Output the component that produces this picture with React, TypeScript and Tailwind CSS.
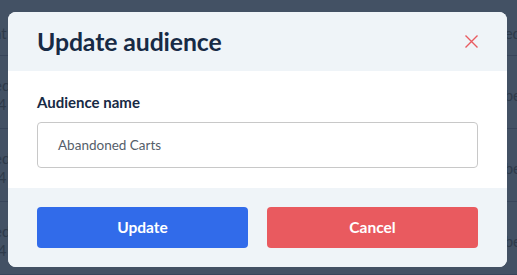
import React from "react";

const rowsLeft = ["ed", "ed", "ed"];

const Backdrop = () => {
  return (
    <div className="absolute inset-0 flex flex-col bg-[#435164] text-[#2e3a4a] text-[15px]">
      <div className="h-[58px] border-b border-[#38455a] flex items-center justify-between">
        <span className="-ml-[6px] mt-[12px]">at</span>
        <span className="-mr-[4px] mt-[12px]">ed</span>
      </div>
      {rowsLeft.map((r, i) => (
        <div
          key={i}
          className="h-[75px] border-b border-[#38455a] flex items-start justify-between"
        >
          <div className="flex flex-col -ml-[6px] pt-[20px] leading-[19px]">
            <span>{r}</span>
            <span>:4</span>
          </div>
          <span className="-mr-[4px] pt-[28px]">be</span>
        </div>
      ))}
    </div>
  );
};

const App = () => {
  return (
    <div
      className="relative w-[517px] h-[275px] overflow-hidden"
      style={{ fontFamily: "Lato, 'Open Sans', sans-serif" }}
    >
      <Backdrop />
      <div className="relative pt-[12px] pl-[8px]">
        <div className="w-[499px] h-[255px] rounded-[8px] overflow-hidden bg-white flex flex-col">
          <div className="h-[59px] bg-[#eff4f8] flex items-center justify-between px-[29px]">
            <h2 className="text-[24.8px] font-bold text-[#172a45] tracking-[-0.1px]">
              Update audience
            </h2>
            <button className="text-[#e95a60]">
              <svg width="13" height="13" viewBox="0 0 13 13" fill="none">
                <path
                  d="M0.5 0.5L12.5 12.5M12.5 0.5L0.5 12.5"
                  stroke="currentColor"
                  strokeWidth="1.4"
                />
              </svg>
            </button>
          </div>
          <div className="h-[117px] px-[29px] pt-[19px]">
            <label className="block text-[15px] leading-[24px] font-bold text-[#172a45]">
              Audience name
            </label>
            <div className="mt-[8px] h-[46px] border border-[#c8c8c8] rounded-[4px] flex items-center px-[20px] text-[13.5px] text-[#555e6a]">
              Abandoned Carts
            </div>
          </div>
          <div className="flex-1 bg-[#eff4f8] px-[29px] pt-[19px] flex gap-[19px]">
            <button className="w-[211px] h-[41px] rounded-[4px] bg-[#316bea] text-white text-[15.5px] font-bold">
              Update
            </button>
            <button className="w-[211px] h-[41px] rounded-[4px] bg-[#e95a5f] text-white text-[15.5px] font-bold">
              Cancel
            </button>
          </div>
        </div>
      </div>
    </div>
  );
};

export default App;
